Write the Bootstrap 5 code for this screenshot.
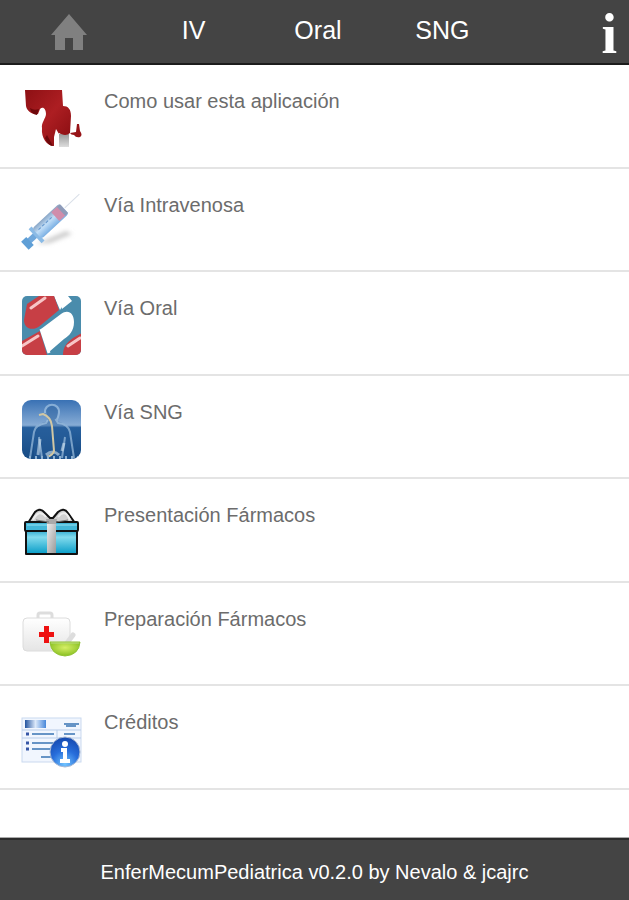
<!DOCTYPE html>
<html lang="es">
<head>
<meta charset="utf-8">
<meta name="viewport" content="width=device-width, initial-scale=1">
<title>EnferMecumPediatrica</title>
<link href="https://cdn.jsdelivr.net/npm/bootstrap@5.3.0/dist/css/bootstrap.min.css" rel="stylesheet">
<style>
  body { font-family: "Liberation Sans", Arial, sans-serif; }
  .app-bar, .app-foot { background: #444; color: #fff; }
  .app-bar { height: 65px; border-bottom: 2px solid #1c1c1c; padding-left: 7px; font-size: 25px; line-height: 30px; }
  .app-bar a { color: #fff; width: 20%; text-decoration: none; }
  .app-bar .info-link { font: bold 56px/60px "Liberation Serif", "Times New Roman", serif; padding-right: 12px; padding-top: 4px; }
  .app-foot { height: 62px; border-top: 2px solid #2b2b2b; font-size: 20px; line-height: 24px; padding-top: 4px; box-shadow: 0 -1px 0 #aaa; }
  .menu-area { padding-bottom: 48px; }
  .menu-row { border-bottom: 2px solid #e4e4e4; color: #6c6c6c; font-size: 20px; line-height: 24px; padding: 24px 22px; gap: 22px; min-height: 84px; flex-basis: 0; }
  .menu-row svg { width: 60px; height: 60px; flex: none; overflow: visible; }
</style>
</head>
<body class="bg-white min-vh-100 d-flex flex-column">
<header>
  <nav class="app-bar d-flex align-items-center text-center" aria-label="Principal">
    <a href="#inicio" aria-label="Inicio"><svg class="d-block mx-auto" width="36" height="36" viewBox="0 0 36 36"><path fill="#808080" d="M18 0 36 21H32V36H22V24H14V36H4V21H0Z"/></svg></a>
    <a href="#iv" class="pb-1">IV</a>
    <a href="#oral" class="pb-1">Oral</a>
    <a href="#sng" class="pb-1">SNG</a>
    <a href="#info" class="info-link text-end">i</a>
  </nav>
</header>
<main class="menu-area flex-grow-1 d-flex flex-column">
  <a href="#uso" class="menu-row flex-grow-1 d-flex text-decoration-none">
    <svg viewBox="0 0 60 60"><defs><linearGradient id="red" x2="1" y2="1"><stop stop-color="#8d1014"/><stop offset=".5" stop-color="#ad1e22"/><stop offset="1" stop-color="#860c10"/></linearGradient><linearGradient id="leg" x2="0" y2="1"><stop stop-color="#999"/><stop offset="1" stop-color="#ddd"/></linearGradient></defs>
      <path fill="url(#leg)" d="M36 45H47V58H36Z"/>
      <path fill="url(#red)" d="M3 1H40L41 17C46 17 49 20 49 27L48 44C45 47 40 46 37 44L33 50 32 57C25 57 19 49 20 39 19 34 24 29 24 25 24 20 21 17 18 20L16 25C10 26 5 22 4 17Z"/>
      <path fill="#6d080b" d="M8 19Q12 22 17 20L15 26Q9 25 8 19ZM25 46l6 11q-5 0-8-8Z"/>
      <path fill="#fff" d="M34 40 37 45V58H32V48Z"/>
      <path fill="#971317" d="M55 35h2l1 7q3 4 0 6-4 1-6-2-3 0-4-2l6-1Z"/></svg>
    <span>Como usar esta aplicación</span>
  </a>
  <a href="#iv" class="menu-row flex-grow-1 d-flex text-decoration-none">
    <svg viewBox="0 0 60 60"><defs><linearGradient id="barrel" x2="0" y2="1"><stop stop-color="#8aa7c7"/><stop offset=".45" stop-color="#c0ddf7"/><stop offset="1" stop-color="#7aafe3"/></linearGradient><filter id="soft" x="-30%" y="-30%" width="160%" height="160%"><feGaussianBlur stdDeviation="2"/></filter></defs>
      <path d="M14 51 44 38 50 41 28 50Z" fill="#ccc" filter="url(#soft)"/>
      <g transform="translate(4 51) rotate(-43)"><path d="M53 0H73" stroke="#d9dfe8" stroke-width="1"/><path d="M2-3H15V3H2Z" fill="#70a8dc"/><path d="M-2-5H5V6H-2Z" fill="#5f9fd6"/><path d="M12-9H16V10H12Z" fill="#8bbbe6"/><rect x="15" y="-7" width="37" height="14" rx="3" fill="url(#barrel)"/><path d="M40-6h9v12h-9Z" fill="#d08dab"/><path d="M48-6h4V6h-4Z" fill="#8f9bb8"/><path d="M19-2H39" stroke="#6295cc" stroke-width="1" stroke-dasharray="3 2"/></g></svg>
    <span>Vía Intravenosa</span>
  </a>
  <a href="#oral" class="menu-row flex-grow-1 d-flex text-decoration-none">
    <svg viewBox="0 0 60 60"><defs><clipPath id="tile"><rect y="0" width="59" height="59" rx="5"/></clipPath></defs>
      <g clip-path="url(#tile)"><rect width="60" height="60" fill="#4a8cac"/>
      <path fill="#fff" d="M32 0H46L38 14ZM19 33 39 18C46 13 52 17 52 26 52 35 47 40 42 43L27 56Z"/>
      <path fill="#fff" d="M32 0H36L40 13 50 5 46 0Z"/>
      <path fill="#c73f45" d="M5 8 17 0H32L37 14 19 29C11 36 2 33 2 24Z"/>
      <path fill="#c73f45" d="M0 45 18 35 25 59H0ZM41 59C41 52 44 47 51 42L60 37V60H41Z"/>
      <path fill="none" stroke="#fff" stroke-width="3" d="M19 33 27 57"/>
      <path fill="none" stroke="#f7c5c6" stroke-width="3" stroke-linecap="round" d="M9 12 23 2M0 50 16 40M46 50 58 42"/></g></svg>
    <span>Vía Oral</span>
  </a>
  <a href="#sng" class="menu-row flex-grow-1 d-flex text-decoration-none">
    <svg viewBox="0 0 60 60"><defs><linearGradient id="xray" x2="0" y2="1"><stop stop-color="#3971b4"/><stop offset=".42" stop-color="#87acd5"/><stop offset=".46" stop-color="#27609e"/><stop offset="1" stop-color="#164a83"/></linearGradient><clipPath id="round"><rect width="59" height="59" rx="9"/></clipPath></defs>
      <g clip-path="url(#round)" fill="none"><rect width="60" height="60" fill="url(#xray)"/>
      <path fill="#285d9a" fill-opacity=".45" d="M12 59V30Q14 24 26 21L24 10Q30 2 36 10L35 21Q46 24 48 30V59Z"/>
      <path stroke="#a8c7e5" stroke-opacity=".65" stroke-width="2" d="M23 13C22 2 38 2 37 13Q36 19 34 20L36 23Q46 24 48 32L52 58M26 20 24 23Q13 25 12 32L8 58M17 37 20 58M43 37 40 58"/>
      <path stroke="#cfe1ef" stroke-opacity=".6" stroke-width="3" d="M18 39 16 55M42 43 40 51M24 55q7-6 13 0"/>
      <path stroke="#d1c7a3" stroke-width="2" d="M17 15 21 14Q29 17 30 26L32 51Q31 55 25 57"/>
      <path stroke="#8db1d3" stroke-dasharray="2 4" stroke-width="4" d="M7 58H56"/></g></svg>
    <span>Vía SNG</span>
  </a>
  <a href="#presentacion" class="menu-row flex-grow-1 d-flex text-decoration-none">
    <svg viewBox="0 0 60 60"><defs><linearGradient id="gift" x2="0" y2="1"><stop stop-color="#2ba6cc"/><stop offset=".3" stop-color="#82dbed"/><stop offset="1" stop-color="#079cc7"/></linearGradient><linearGradient id="ribbon" x2="1" y2="1"><stop stop-color="#eee"/><stop offset="1" stop-color="#999"/></linearGradient></defs>
      <g stroke="#111" stroke-width="2" stroke-linejoin="round"><path fill="#d0d0d0" d="M6 20 13 9Q18 4 23 10L28 15H31L36 9Q42 4 46 10L53 20 43 22H15Z"/><path fill="url(#gift)" d="M4 27H55V51H4Z"/><rect x="3" y="19" width="53" height="9" rx="1" fill="#43b7d8"/></g>
      <path fill="#6dcce5" d="M5 21H55V23H5Z"/><path fill="url(#ribbon)" d="M25 20H34V50H25Z"/><path fill="#aaa" d="M24 16h11l-1 5h-9Z"/><path fill="none" stroke="#eee" stroke-width="2" d="M11 17Q17 5 24 14M36 14Q43 5 48 17"/><path fill="none" stroke="#777" d="M14 17 27 19M46 17 34 19"/></svg>
    <span>Presentación Fármacos</span>
  </a>
  <a href="#preparacion" class="menu-row flex-grow-1 d-flex text-decoration-none">
    <svg viewBox="0 0 60 60"><defs><linearGradient id="kit" x2="0" y2="1"><stop stop-color="#fff"/><stop offset="1" stop-color="#e5e5e5"/></linearGradient><radialGradient id="bowl" cx=".5" cy=".4" r=".6"><stop stop-color="#d6ef66"/><stop offset="1" stop-color="#88bf20"/></radialGradient></defs>
      <path fill="none" stroke="#ddd" stroke-width="3" d="M16 12V8Q16 6 18 6H28Q30 6 30 8V12"/><rect x="1" y="11" width="47" height="33" rx="4" fill="url(#kit)" stroke="#dcdcdc"/>
      <path fill="#ee1111" d="M22 19H27V25H32V30H27V36H22V30H17V25H22Z"/><path stroke="#ddd" stroke-width="5" stroke-linecap="round" d="M45 36 51 28"/><path fill="url(#bowl)" stroke="#91c333" d="M28 35H58Q57 48 43 49 29 48 28 35Z"/><path stroke="#bddd83" d="M29 36H57"/></svg>
    <span>Preparación Fármacos</span>
  </a>
  <a href="#creditos" class="menu-row flex-grow-1 d-flex text-decoration-none">
    <svg viewBox="0 0 60 60"><defs><linearGradient id="photo"><stop stop-color="#23549f"/><stop offset=".5" stop-color="#dce9fa"/><stop offset="1" stop-color="#4787da"/></linearGradient><radialGradient id="ball" cx=".5" cy=".9" r=".9"><stop stop-color="#72c4ff"/><stop offset=".5" stop-color="#286edb"/><stop offset="1" stop-color="#1548ae"/></radialGradient></defs>
      <rect x="0" y="8" width="59" height="44" fill="#f1f6fe" stroke="#cad9ef"/><path fill="url(#photo)" d="M3 10H24V18H3Z"/><path fill="none" stroke="#b9cde9" d="M0 20H59M0 28H59M35 20V28"/>
      <path fill="none" stroke="#6694c6" stroke-width="2" d="M42 14H57M44 16H54M10 24H32M42 24H53M10 33H32M10 39H32M19 47H34"/><path stroke="#3656a6" stroke-width="3" d="M4 24H7M4 33H7M4 39H7"/>
      <circle cx="43" cy="42" r="15" fill="url(#ball)" stroke="#a9b9d3"/><circle cx="43" cy="34" r="3" fill="#fff"/><path fill="none" stroke="#fff" stroke-width="4" d="M39 40H43V51M38 51H48"/></svg>
    <span>Créditos</span>
  </a>
</main>
<footer class="app-foot d-flex align-items-center justify-content-center">EnferMecumPediatrica v0.2.0 by Nevalo &amp; jcajrc</footer>
<script src="https://cdn.jsdelivr.net/npm/bootstrap@5.3.0/dist/js/bootstrap.bundle.min.js"></script>
</body>
</html>
